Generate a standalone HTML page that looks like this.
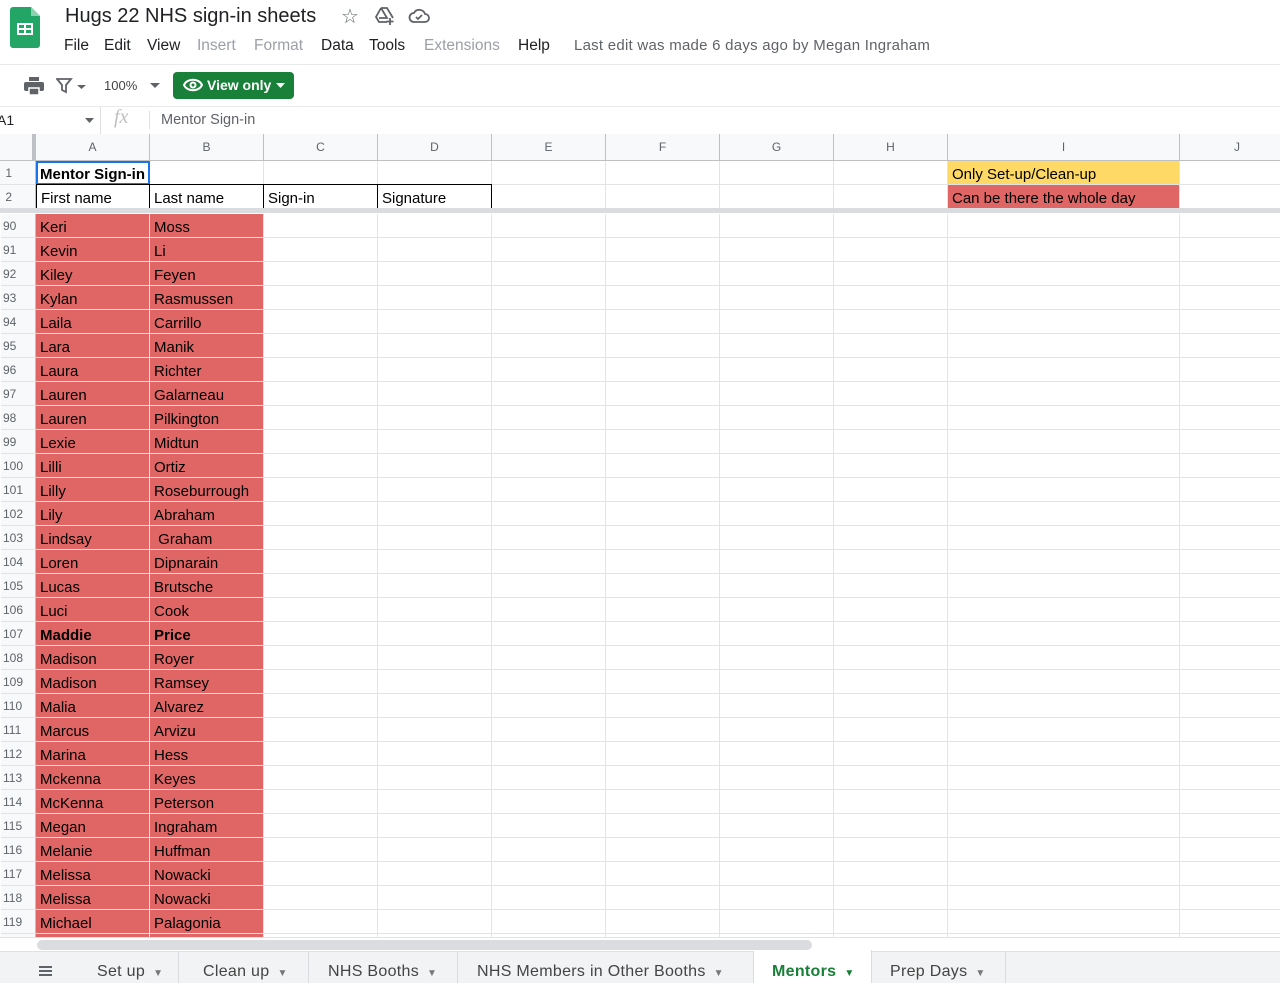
<!DOCTYPE html>
<html><head><meta charset="utf-8"><style>
*{box-sizing:border-box;margin:0;padding:0}
body{width:1280px;height:983px;overflow:hidden;background:#fff;font-family:"Liberation Sans",Arial,sans-serif;position:relative}
.abs{position:absolute}
.r{position:absolute;left:0;display:flex;height:24px}
.r div{height:24px;border-right:1px solid #e2e3e3;border-bottom:1px solid #e2e3e3;font-size:15px;line-height:27px;padding-left:4px;color:#000;white-space:nowrap;overflow:hidden}
.r div.h{background:#f8f9fa;color:#5f6368;font-size:12px;border-right:1px solid #c0c0c0;padding-left:2px;line-height:25px}
.w0{width:35px}.w1{width:114px}.w2{width:232px}.w3{width:101px}
.red{background:#e06666}
.m{position:absolute;top:37px;font-size:15.5px;color:#202124}
.g{color:#9aa0a6}
.ch{position:absolute;top:134px;height:27px;background:#f8f9fa;border-right:1px solid #c0c0c0;border-bottom:1px solid #c0c0c0;font-size:12px;color:#5f6368;text-align:center;line-height:26px}
.tab{position:absolute;top:951px;height:32px;font-size:16px;color:#444;line-height:42px;border-right:1px solid #dadce0;padding-left:18px;letter-spacing:.3px}
.tab i{font-style:normal;font-size:10px;color:#777;margin-left:8px}
</style></head><body>
<svg class="abs" style="left:10px;top:7px" width="30" height="41" viewBox="0 0 30 41"><path d="M3 0h18l9 9v29a3 3 0 0 1-3 3H3a3 3 0 0 1-3-3V3a3 3 0 0 1 3-3z" fill="#23a566"/><path d="M21 0v9h9z" fill="#8ed1b1"/><rect x="7" y="16" width="16" height="12" fill="#fff"/><rect x="9" y="18" width="5" height="3" fill="#23a566"/><rect x="16" y="18" width="5" height="3" fill="#23a566"/><rect x="9" y="23" width="5" height="3" fill="#23a566"/><rect x="16" y="23" width="5" height="3" fill="#23a566"/></svg>
<div class="abs" style="left:65px;top:5px;font-size:20px;color:#202124">Hugs 22 NHS sign-in sheets</div>
<div class="abs" style="left:341px;top:4px;font-size:20px;color:#5f6368">☆</div>
<svg class="abs" style="left:374px;top:6px" width="22" height="20" viewBox="0 0 22 20" fill="none" stroke="#5f6368" stroke-width="1.8"><path d="M7 2h6l6 10M7 2L2 11l3 5h8M7 2l6 10H5"/><path d="M16 12v7M12.5 15.5h7"/></svg>
<svg class="abs" style="left:408px;top:8px" width="22" height="16" viewBox="0 0 22 16" fill="none" stroke="#5f6368" stroke-width="1.8"><path d="M6 14h11a4 4 0 0 0 0-8 6 6 0 0 0-11-1 4.5 4.5 0 0 0 0 9z"/><path d="M8 9l2 2 4-4"/></svg>
<div class="m" style="left:64px">File</div>
<div class="m" style="left:104px">Edit</div>
<div class="m" style="left:147px">View</div>
<div class="m g" style="left:197px">Insert</div>
<div class="m g" style="left:254px">Format</div>
<div class="m" style="left:321px">Data</div>
<div class="m" style="left:369px">Tools</div>
<div class="m g" style="left:424px">Extensions</div>
<div class="m" style="left:518px">Help</div>
<div class="m" style="left:574px;color:#5f6368;font-size:15px;letter-spacing:.25px">Last edit was made 6 days ago by Megan Ingraham</div>
<div class="abs" style="left:0;top:64px;width:1280px;height:1px;background:#e8eaed"></div>
<svg class="abs" style="left:24px;top:77px" width="20" height="18" viewBox="0 0 20 18"><rect x="5" y="0" width="10" height="4" fill="#5f6368"/><rect x="0" y="5" width="20" height="9" rx="2" fill="#5f6368"/><rect x="5" y="11" width="10" height="7" fill="#5f6368" stroke="#fff" stroke-width="1.5"/></svg>
<svg class="abs" style="left:56px;top:78px" width="34" height="16" viewBox="0 0 34 16"><path d="M1 1h14l-5 6v7l-4-2V7z" fill="none" stroke="#5f6368" stroke-width="1.8"/><path d="M21 7h9l-4.5 4z" fill="#5f6368"/></svg>
<div class="abs" style="left:104px;top:78px;font-size:13px;color:#444">100%</div>
<svg class="abs" style="left:150px;top:83px" width="10" height="6"><path d="M0 0h10l-5 5z" fill="#5f6368"/></svg>
<div class="abs" style="left:173px;top:72px;width:121px;height:27px;background:#188038;border-radius:4px;color:#fff;font-size:14px;font-weight:bold;line-height:27px;padding-left:34px">View only</div>
<svg class="abs" style="left:183px;top:78px" width="20" height="14" viewBox="0 0 20 14" fill="none" stroke="#fff" stroke-width="2"><path d="M1 7c3-7 15-7 18 0-3 7-15 7-18 0z"/><circle cx="10" cy="7" r="2.5"/></svg>
<svg class="abs" style="left:276px;top:83px" width="10" height="6"><path d="M0 0h9l-4.5 5z" fill="#fff"/></svg>
<div class="abs" style="left:0;top:106px;width:1280px;height:1px;background:#e8eaed"></div>
<div class="abs" style="left:-3px;top:112px;font-size:14px;color:#202124">A1</div>
<svg class="abs" style="left:85px;top:118px" width="10" height="6"><path d="M0 0h9l-4.5 5z" fill="#5f6368"/></svg>
<div class="abs" style="left:100px;top:107px;width:1px;height:27px;background:#e0e0e0"></div>
<div class="abs" style="left:114px;top:106px;font-size:20px;font-style:italic;color:#c0c0c0;font-family:'Liberation Serif',serif">fx</div>
<div class="abs" style="left:149px;top:111px;width:1px;height:18px;background:#e0e0e0"></div>
<div class="abs" style="left:161px;top:112px;font-size:14.5px;color:#5f6368">Mentor Sign-in</div>
<div class="ch" style="left:0;width:36px;border-right:4px solid #bdc1c6"></div>
<div class="ch" style="left:36px;width:114px">A</div>
<div class="ch" style="left:150px;width:114px">B</div>
<div class="ch" style="left:264px;width:114px">C</div>
<div class="ch" style="left:378px;width:114px">D</div>
<div class="ch" style="left:492px;width:114px">E</div>
<div class="ch" style="left:606px;width:114px">F</div>
<div class="ch" style="left:720px;width:114px">G</div>
<div class="ch" style="left:834px;width:114px">H</div>
<div class="ch" style="left:948px;width:232px">I</div>
<div class="ch" style="left:1180px;width:115px">J</div>
<div class="r" style="top:161px"><div class="h w0" style="width:36px">&nbsp;1</div><div class="w1" style="font-weight:bold;border:2px solid #1a73e8;padding-left:2px;line-height:24px">Mentor Sign-in</div><div class="w1"></div><div class="w1"></div><div class="w1"></div><div class="w1"></div><div class="w1"></div><div class="w1"></div><div class="w1"></div><div class="w2" style="background:#ffd966">Only Set-up/Clean-up</div><div class="w3"></div></div>
<div class="r" style="top:185px"><div class="h w0" style="width:36px">&nbsp;2</div><div class="w1" style="border:1px solid #000;border-top:none">First name</div><div class="w1" style="border:1px solid #000;border-left:none;border-top:none">Last name</div><div class="w1" style="border:1px solid #000;border-left:none;border-top:none">Sign-in</div><div class="w1" style="border:1px solid #000;border-left:none;border-top:none">Signature</div><div class="w1"></div><div class="w1"></div><div class="w1"></div><div class="w1"></div><div class="w2 red">Can be there the whole day</div><div class="w3"></div></div>
<div class="abs" style="left:36px;top:184px;width:456px;height:1px;background:#000"></div>
<div class="abs" style="left:0;top:208px;width:1280px;height:5px;background:#dadce0"></div>
<div class="abs" style="left:1px;top:214px">
<div class="r" style="top:0"><div class="h w0">90</div><div class="w1 red">Keri</div><div class="w1 red">Moss</div><div class="w1"></div><div class="w1"></div><div class="w1"></div><div class="w1"></div><div class="w1"></div><div class="w1"></div><div class="w2"></div><div class="w3"></div></div>
<div class="r" style="top:24px"><div class="h w0">91</div><div class="w1 red">Kevin</div><div class="w1 red">Li</div><div class="w1"></div><div class="w1"></div><div class="w1"></div><div class="w1"></div><div class="w1"></div><div class="w1"></div><div class="w2"></div><div class="w3"></div></div>
<div class="r" style="top:48px"><div class="h w0">92</div><div class="w1 red">Kiley</div><div class="w1 red">Feyen</div><div class="w1"></div><div class="w1"></div><div class="w1"></div><div class="w1"></div><div class="w1"></div><div class="w1"></div><div class="w2"></div><div class="w3"></div></div>
<div class="r" style="top:72px"><div class="h w0">93</div><div class="w1 red">Kylan</div><div class="w1 red">Rasmussen</div><div class="w1"></div><div class="w1"></div><div class="w1"></div><div class="w1"></div><div class="w1"></div><div class="w1"></div><div class="w2"></div><div class="w3"></div></div>
<div class="r" style="top:96px"><div class="h w0">94</div><div class="w1 red">Laila</div><div class="w1 red">Carrillo</div><div class="w1"></div><div class="w1"></div><div class="w1"></div><div class="w1"></div><div class="w1"></div><div class="w1"></div><div class="w2"></div><div class="w3"></div></div>
<div class="r" style="top:120px"><div class="h w0">95</div><div class="w1 red">Lara</div><div class="w1 red">Manik</div><div class="w1"></div><div class="w1"></div><div class="w1"></div><div class="w1"></div><div class="w1"></div><div class="w1"></div><div class="w2"></div><div class="w3"></div></div>
<div class="r" style="top:144px"><div class="h w0">96</div><div class="w1 red">Laura</div><div class="w1 red">Richter</div><div class="w1"></div><div class="w1"></div><div class="w1"></div><div class="w1"></div><div class="w1"></div><div class="w1"></div><div class="w2"></div><div class="w3"></div></div>
<div class="r" style="top:168px"><div class="h w0">97</div><div class="w1 red">Lauren</div><div class="w1 red">Galarneau</div><div class="w1"></div><div class="w1"></div><div class="w1"></div><div class="w1"></div><div class="w1"></div><div class="w1"></div><div class="w2"></div><div class="w3"></div></div>
<div class="r" style="top:192px"><div class="h w0">98</div><div class="w1 red">Lauren</div><div class="w1 red">Pilkington</div><div class="w1"></div><div class="w1"></div><div class="w1"></div><div class="w1"></div><div class="w1"></div><div class="w1"></div><div class="w2"></div><div class="w3"></div></div>
<div class="r" style="top:216px"><div class="h w0">99</div><div class="w1 red">Lexie</div><div class="w1 red">Midtun</div><div class="w1"></div><div class="w1"></div><div class="w1"></div><div class="w1"></div><div class="w1"></div><div class="w1"></div><div class="w2"></div><div class="w3"></div></div>
<div class="r" style="top:240px"><div class="h w0">100</div><div class="w1 red">Lilli</div><div class="w1 red">Ortiz</div><div class="w1"></div><div class="w1"></div><div class="w1"></div><div class="w1"></div><div class="w1"></div><div class="w1"></div><div class="w2"></div><div class="w3"></div></div>
<div class="r" style="top:264px"><div class="h w0">101</div><div class="w1 red">Lilly</div><div class="w1 red">Roseburrough</div><div class="w1"></div><div class="w1"></div><div class="w1"></div><div class="w1"></div><div class="w1"></div><div class="w1"></div><div class="w2"></div><div class="w3"></div></div>
<div class="r" style="top:288px"><div class="h w0">102</div><div class="w1 red">Lily</div><div class="w1 red">Abraham</div><div class="w1"></div><div class="w1"></div><div class="w1"></div><div class="w1"></div><div class="w1"></div><div class="w1"></div><div class="w2"></div><div class="w3"></div></div>
<div class="r" style="top:312px"><div class="h w0">103</div><div class="w1 red">Lindsay</div><div class="w1 red">&nbsp;Graham</div><div class="w1"></div><div class="w1"></div><div class="w1"></div><div class="w1"></div><div class="w1"></div><div class="w1"></div><div class="w2"></div><div class="w3"></div></div>
<div class="r" style="top:336px"><div class="h w0">104</div><div class="w1 red">Loren</div><div class="w1 red">Dipnarain</div><div class="w1"></div><div class="w1"></div><div class="w1"></div><div class="w1"></div><div class="w1"></div><div class="w1"></div><div class="w2"></div><div class="w3"></div></div>
<div class="r" style="top:360px"><div class="h w0">105</div><div class="w1 red">Lucas</div><div class="w1 red">Brutsche</div><div class="w1"></div><div class="w1"></div><div class="w1"></div><div class="w1"></div><div class="w1"></div><div class="w1"></div><div class="w2"></div><div class="w3"></div></div>
<div class="r" style="top:384px"><div class="h w0">106</div><div class="w1 red">Luci</div><div class="w1 red">Cook</div><div class="w1"></div><div class="w1"></div><div class="w1"></div><div class="w1"></div><div class="w1"></div><div class="w1"></div><div class="w2"></div><div class="w3"></div></div>
<div class="r" style="top:408px"><div class="h w0">107</div><div class="w1 red" style="font-weight:bold">Maddie</div><div class="w1 red" style="font-weight:bold">Price</div><div class="w1"></div><div class="w1"></div><div class="w1"></div><div class="w1"></div><div class="w1"></div><div class="w1"></div><div class="w2"></div><div class="w3"></div></div>
<div class="r" style="top:432px"><div class="h w0">108</div><div class="w1 red">Madison</div><div class="w1 red">Royer</div><div class="w1"></div><div class="w1"></div><div class="w1"></div><div class="w1"></div><div class="w1"></div><div class="w1"></div><div class="w2"></div><div class="w3"></div></div>
<div class="r" style="top:456px"><div class="h w0">109</div><div class="w1 red">Madison</div><div class="w1 red">Ramsey</div><div class="w1"></div><div class="w1"></div><div class="w1"></div><div class="w1"></div><div class="w1"></div><div class="w1"></div><div class="w2"></div><div class="w3"></div></div>
<div class="r" style="top:480px"><div class="h w0">110</div><div class="w1 red">Malia</div><div class="w1 red">Alvarez</div><div class="w1"></div><div class="w1"></div><div class="w1"></div><div class="w1"></div><div class="w1"></div><div class="w1"></div><div class="w2"></div><div class="w3"></div></div>
<div class="r" style="top:504px"><div class="h w0">111</div><div class="w1 red">Marcus</div><div class="w1 red">Arvizu</div><div class="w1"></div><div class="w1"></div><div class="w1"></div><div class="w1"></div><div class="w1"></div><div class="w1"></div><div class="w2"></div><div class="w3"></div></div>
<div class="r" style="top:528px"><div class="h w0">112</div><div class="w1 red">Marina</div><div class="w1 red">Hess</div><div class="w1"></div><div class="w1"></div><div class="w1"></div><div class="w1"></div><div class="w1"></div><div class="w1"></div><div class="w2"></div><div class="w3"></div></div>
<div class="r" style="top:552px"><div class="h w0">113</div><div class="w1 red">Mckenna</div><div class="w1 red">Keyes</div><div class="w1"></div><div class="w1"></div><div class="w1"></div><div class="w1"></div><div class="w1"></div><div class="w1"></div><div class="w2"></div><div class="w3"></div></div>
<div class="r" style="top:576px"><div class="h w0">114</div><div class="w1 red">McKenna</div><div class="w1 red">Peterson</div><div class="w1"></div><div class="w1"></div><div class="w1"></div><div class="w1"></div><div class="w1"></div><div class="w1"></div><div class="w2"></div><div class="w3"></div></div>
<div class="r" style="top:600px"><div class="h w0">115</div><div class="w1 red">Megan</div><div class="w1 red">Ingraham</div><div class="w1"></div><div class="w1"></div><div class="w1"></div><div class="w1"></div><div class="w1"></div><div class="w1"></div><div class="w2"></div><div class="w3"></div></div>
<div class="r" style="top:624px"><div class="h w0">116</div><div class="w1 red">Melanie</div><div class="w1 red">Huffman</div><div class="w1"></div><div class="w1"></div><div class="w1"></div><div class="w1"></div><div class="w1"></div><div class="w1"></div><div class="w2"></div><div class="w3"></div></div>
<div class="r" style="top:648px"><div class="h w0">117</div><div class="w1 red">Melissa</div><div class="w1 red">Nowacki</div><div class="w1"></div><div class="w1"></div><div class="w1"></div><div class="w1"></div><div class="w1"></div><div class="w1"></div><div class="w2"></div><div class="w3"></div></div>
<div class="r" style="top:672px"><div class="h w0">118</div><div class="w1 red">Melissa</div><div class="w1 red">Nowacki</div><div class="w1"></div><div class="w1"></div><div class="w1"></div><div class="w1"></div><div class="w1"></div><div class="w1"></div><div class="w2"></div><div class="w3"></div></div>
<div class="r" style="top:696px"><div class="h w0">119</div><div class="w1 red">Michael</div><div class="w1 red">Palagonia</div><div class="w1"></div><div class="w1"></div><div class="w1"></div><div class="w1"></div><div class="w1"></div><div class="w1"></div><div class="w2"></div><div class="w3"></div></div>
<div class="r" style="top:720px"><div class="h w0"></div><div class="w1 red"></div><div class="w1 red"></div><div class="w1"></div><div class="w1"></div><div class="w1"></div><div class="w1"></div><div class="w1"></div><div class="w1"></div><div class="w2"></div><div class="w3"></div></div>
</div>
<div class="abs" style="left:0;top:937px;width:1280px;height:14px;background:#fff;border-top:1px solid #e2e3e3"></div>
<div class="abs" style="left:37px;top:940px;width:775px;height:10px;border-radius:5px;background:#dadce0"></div>
<div class="abs" style="left:0;top:951px;width:1280px;height:32px;background:#f1f3f4;border-top:1px solid #e0e0e0"></div>
<div class="abs" style="left:39px;top:966px;width:13px;height:10px;border-top:2px solid #5f6368;border-bottom:2px solid #5f6368"></div>
<div class="abs" style="left:39px;top:970px;width:13px;height:2px;background:#5f6368"></div>
<div class="tab" style="left:79px;width:100px">Set up<i>▼</i></div>
<div class="tab" style="left:185px;width:124px">Clean up<i>▼</i></div>
<div class="tab" style="left:310px;width:148px">NHS Booths<i>▼</i></div>
<div class="tab" style="left:459px;width:295px">NHS Members in Other Booths<i>▼</i></div>
<div class="tab" style="left:754px;width:118px;background:#fff;color:#188038;font-weight:bold;top:950px;height:33px;line-height:43px">Mentors<i style="color:#188038">▼</i></div>
<div class="tab" style="left:872px;width:134px">Prep Days<i>▼</i></div>
</body></html>
